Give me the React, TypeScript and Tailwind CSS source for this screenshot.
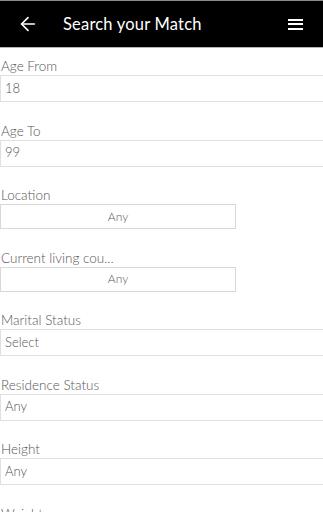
import { ArrowLeft } from "lucide-react";

type Field = {
  label: string;
  value: string;
  short?: boolean;
};

const fields: Field[] = [
  { label: "Age From", value: "18" },
  { label: "Age To", value: "99" },
  { label: "Location", value: "Any", short: true },
  { label: "Current living cou...", value: "Any", short: true },
  { label: "Marital Status", value: "Select" },
  { label: "Residence Status", value: "Any" },
  { label: "Height", value: "Any" },
  { label: "Weight", value: "Any" },
];

export default function App() {
  return (
    <div
      className="h-[512px] w-[323px] overflow-hidden bg-white"
      style={{ fontFamily: "Lato, 'Open Sans', sans-serif" }}
    >
      <header className="flex h-[48px] items-center border-t border-b border-t-[#8a8a8a] border-b-[#b5b5b5] bg-black text-white">
        <button type="button" className="ml-[17px] flex items-center">
          <ArrowLeft size={22} strokeWidth={1.8} />
        </button>
        <h1 className="ml-[24px] flex-1 text-[16.5px] font-normal tracking-[0.2px]">
          Search your Match
        </h1>
        <button type="button" className="mr-[20px] flex flex-col gap-[2.5px]">
          <span className="block h-[2px] w-[15px] bg-white" />
          <span className="block h-[2px] w-[15px] bg-white" />
          <span className="block h-[2px] w-[15px] bg-white" />
        </button>
      </header>

      <div className="flex flex-col gap-[20.5px] pt-[10px]">
        {fields.map((f) => (
          <div key={f.label} className="flex flex-col">
            <label className="h-[17px] pl-[1px] text-[13.5px] font-light leading-[17px] text-[#555]">
              {f.label}
            </label>
            {f.short ? (
              <div className="flex h-[25px] w-[236px] items-center justify-center border border-[#d8d8d8] text-[12px] font-light text-[#555]">
                {f.value}
              </div>
            ) : (
              <div className="flex h-[27px] w-full items-center border border-r-0 border-[#e0e0e0] pl-[4px] text-[13px] font-light text-[#555]">
                {f.value}
              </div>
            )}
          </div>
        ))}
      </div>
    </div>
  );
}
